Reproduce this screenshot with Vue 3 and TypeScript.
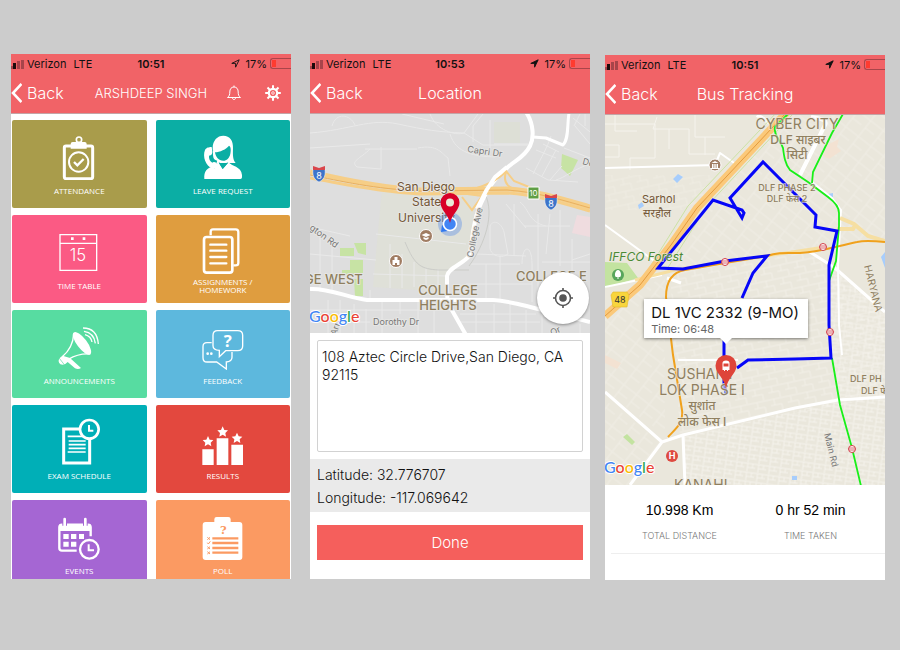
<script setup lang="ts">
import { ref } from 'vue'

interface Screen {
  id: string
  time: string
  title: string
}
interface Tile {
  id: string
  label: string
  color: string
  box: string
}

const screens: Screen[] = [
  { id: 'home', time: '10:51', title: 'ARSHDEEP SINGH' },
  { id: 'location', time: '10:53', title: 'Location' },
  { id: 'bus', time: '10:51', title: 'Bus Tracking' },
]

const tiles: Tile[] = [
  { id: 'attendance', label: 'ATTENDANCE', color: '#a99c4b', box: '171 261 132 144' },
  { id: 'leave', label: 'LEAVE REQUEST', color: '#0baea4', box: '602 261 132 144' },
  { id: 'timetable', label: 'TIME TABLE', color: '#fb5a84', box: '171 66 132 144' },
  { id: 'homework', label: 'ASSIGNMENTS / HOMEWORK', color: '#df9d3f', box: '602 66 132 144' },
  { id: 'announce', label: 'ANNOUNCEMENTS', color: '#57dca1', box: '171 351 132 144' },
  { id: 'feedback', label: 'FEEDBACK', color: '#5db8dd', box: '602 351 132 144' },
  { id: 'exam', label: 'EXAM SCHEDULE', color: '#00afb7', box: '171 66 132 144' },
  { id: 'results', label: 'RESULTS', color: '#e3483e', box: '602 66 132 144' },
  { id: 'events', label: 'EVENTS', color: '#a566d3', box: '171 351 132 144' },
  { id: 'poll', label: 'POLL', color: '#fb9a62', box: '602 351 132 144' },
]

const address = ref('108 Aztec Circle Drive,San Diego, CA 92115')
const stops = [
  [120, 147],
  [218, 132],
  [225, 217],
  [247, 334],
]
const stars = [
  [623, 139],
  [667, 110],
  [710, 129],
]
</script>

<template>
  <main class="board">
    <section v-for="s in screens" :key="s.id" class="phone" :class="s.id">
      <header class="top">
        <div class="status">
          <span class="carrier">
            <svg class="signal" viewBox="0 0 14 10" aria-hidden="true">
              <path d="M0 7h2v3H0z" fill="#a8444a" />
              <path d="M2 4h3v6H2z" fill="#1c0a0b" />
              <path d="M6 2h3v8H6zM10 1h3v9h-3z" fill="#a8444a" />
            </svg>
            <span>Verizon</span><span class="net">LTE</span>
          </span>
          <strong>{{ s.time }}</strong>
          <span class="power">
            <svg class="arrow" viewBox="0 0 9 9" aria-hidden="true">
              <path d="M.8 4.4 8.2.8 4.6 8.2V4.4z" :fill="s.id === 'home' ? 'none' : '#111'" stroke="#111" stroke-width=".9" />
            </svg>
            <span>17%</span>
            <span class="battery"><i></i></span>
          </span>
        </div>
        <div class="nav">
          <button class="back" type="button">
            <svg viewBox="0 0 11 20" aria-hidden="true"><path d="M10.500 1 2 10l8.500 9" fill="none" stroke="#fff" stroke-width="2.600" /></svg>
            <span>Back</span>
          </button>
          <h1>{{ s.title }}</h1>
          <div class="tools">
            <template v-if="s.id === 'home'">
              <button type="button" aria-label="Notifications">
                <svg viewBox="0 0 16 16" fill="none" stroke="#fff" stroke-width="1">
                  <path d="M1.500 12.500h13c-2-1.500-2.300-3-2.300-5.500 0-3-1.500-5-4.200-5S3.800 4 3.800 7c0 2.500-.3 4-2.300 5.500zM8 2V.5M6.500 13c0 2 3 2 3 0" />
                </svg>
              </button>
              <button type="button" aria-label="Settings">
                <svg viewBox="0 0 16 16" fill="none" stroke="#fff">
                  <circle cx="8" cy="8" r="4.200" stroke-width="2.200" />
                  <circle cx="8" cy="8" r="1.300" stroke-width=".8" />
                  <path d="M8 .2V4M8 12v3.800M.2 8H4M12 8h3.800M2.500 2.500l2.700 2.700M10.800 10.800l2.700 2.700M2.500 13.500l2.700-2.700M10.800 5.200l2.700-2.700" stroke-width="2" />
                </svg>
              </button>
            </template>
          </div>
        </div>
      </header>

      <nav v-if="s.id === 'home'" class="tiles">
        <button v-for="t in tiles" :key="t.id" type="button" class="tile" :style="{ background: t.color }">
          <svg :viewBox="t.box" fill="none" stroke="#fff" aria-hidden="true">
            <template v-if="t.id === 'attendance'">
              <rect x="193" y="303" width="85" height="98" rx="5" stroke-width="9" />
              <circle cx="237" cy="284" r="8" stroke-width="5" />
              <path d="M212 311v-14q0-6 6-6h36q6 0 6 6v14z" fill="#fff" stroke="none" />
              <circle cx="236" cy="351" r="29" stroke-width="6" />
              <path d="m222 351 10 10 19-19" stroke-width="7" />
            </template>
            <template v-else-if="t.id === 'leave'">
              <path d="M637 310c0-24 14-38 32-38 20 0 30 15 29 38-1 22 0 36 8 44h-62c-6-12-7-30-7-44z" fill="#fff" stroke="none" />
              <path d="M612 402c-2-22 8-34 28-38l14-12 13 20 18-20c8 12 38 12 40 38v7q0 5-5 5z" fill="#fff" stroke="none" />
              <path d="M644 322c14-1 34-9 42-20 6 3 6 14 4 24-3 14-11 21-21 21-14 0-23-11-25-25z" :fill="t.color" stroke="none" />
              <path d="M655 352q12 8 29 0l-17 20z" :fill="t.color" stroke="none" />
              <path d="M629 309c-10 14-8 42 18 50" :stroke="t.color" stroke-width="24" />
              <path d="M634 306c-10 1-15 1-20 9-8 20 2 48 22 56 8 2 14-3 17-9-1-8-12-14-17-9-7-3-11-13-10-21 8 0 10-5 10-14z" fill="#fff" stroke="none" />
            </template>
            <template v-else-if="t.id === 'timetable'">
              <path d="M180 89h110v107H180zM180 115h110" stroke-width="4" />
              <path d="M213 97h8v8h-8zM248 97h8v8h-8z" fill="#fff" stroke="none" />
              <text x="234" y="168" class="day">15</text>
            </template>
            <template v-else-if="t.id === 'homework'">
              <path d="M631 91V80q0-7 7-7h68q8 0 8 8v92q0 8-8 8h-7" stroke-width="7" />
              <rect x="611" y="96" width="85" height="107" rx="8" stroke-width="8" />
              <path d="M630 119h48M630 137h48M630 156h48M630 175h48" stroke-width="7" stroke-linecap="round" />
            </template>
            <template v-else-if="t.id === 'announce'">
              <ellipse cx="246" cy="415" rx="15" ry="41" transform="rotate(-37 246 415)" fill="#fff" stroke="none" />
              <path d="M221 386c-1 28-14 52-35 70M271 447c-25-2-46 4-66 16" stroke-width="4" />
              <path d="m188 452 22 7 33 30q-8 5-18 1l-22-19q-9 11-22 7-10-10-1-20z" fill="#fff" stroke="none" />
              <path d="m178 460 14 18" :stroke="t.color" stroke-width="2" />
              <path d="M249 369q42 0 46 48M252 379q30 4 34 36M255 389q18 5 21 22" stroke-width="4" />
            </template>
            <template v-else-if="t.id === 'feedback'">
              <path d="M634 413h-14q-12 0-12 12v33q0 13 12 13h29l29 21v-21q17-1 17-14v-16" stroke-width="4" />
              <path d="M652 377h60q15 0 15 14v32q0 14-15 14h-36l-19 18v-19q-19-1-19-14v-31q0-14 14-14z" stroke-width="4" />
              <circle cx="622" cy="446" r="4" fill="#fff" stroke="none" />
              <circle cx="633" cy="446" r="4" fill="#fff" stroke="none" />
              <text x="682" y="426" class="query">?</text>
            </template>
            <template v-else-if="t.id === 'exam'">
              <path d="M191 102h78v102h-78z" stroke-width="9" />
              <path d="M203 124h54M206 138h51M206 149h51M206 160h51M203 171h54" stroke-width="5" />
              <circle cx="268" cy="103" r="28" :fill="t.color" stroke-width="8" />
              <path d="M267 90v17h13" stroke-width="6" />
            </template>
            <template v-else-if="t.id === 'results'">
              <path d="M606 163h34v47h-34zM649 130h35v80h-35zM693 149h35v61h-35z" fill="#fff" stroke="none" />
              <path
                v-for="p in stars"
                :key="p[0]"
                :transform="`translate(${p[0]} ${p[1]})`"
                d="M0-16 5-5 16-4 8 4 10 15 0 9-10 15-8 4-16-4-5-5z"
                fill="#fff"
                stroke="none"
              />
            </template>
            <template v-else-if="t.id === 'events'">
              <path d="M230 467h-44q-8 0-8-8v-62q0-8 8-8h78q8 0 8 8v27" stroke-width="7" />
              <path d="M177 389h96v19h-96z" fill="#fff" stroke="none" />
              <path d="M194 373v19M256 373v19" :stroke="t.color" stroke-width="14" />
              <path d="M194 372v20M256 372v20" stroke-width="8" stroke-linecap="round" />
              <path d="M190 417h16v15h-16zM213 417h16v15h-16zM237 417h15v15h-15zM190 440h16v15h-16zM213 440h16v15h-16z" fill="#fff" stroke="none" />
              <circle cx="268" cy="463" r="33" :fill="t.color" stroke="none" />
              <circle cx="268" cy="463" r="28" stroke-width="7" />
              <path d="M266 448v18h16" stroke-width="6" />
            </template>
            <template v-else>
              <path d="M616 381h26v-8q0-7 7-7h35q7 0 7 7v8h26q9 0 9 9v96q0 9-9 9H616q-9 0-9-9v-96q0-9 9-9z" fill="#fff" stroke="none" />
              <path d="M636 430h78M636 444h78M636 459h78M636 473h78" :stroke="t.color" stroke-width="7" />
              <path d="m621 427 8 7m0-7-8 7m0 9 3 4 6-8m-9 16 8 7m0-7-8 7m0 8 8 7m0-7-8 7" :stroke="t.color" stroke-width="3" />
              <text x="669" y="417" class="ask" :fill="t.color">?</text>
            </template>
          </svg>
          <span>{{ t.label }}</span>
        </button>
      </nav>

      <template v-else-if="s.id === 'location'">
        <div class="map">
          <svg viewBox="0 0 280 219" preserveAspectRatio="xMidYMid slice" fill="none" role="img" aria-label="Map of College Heights, San Diego">
            <path d="M0 0h280v219H0z" fill="#dedede" />
            <path d="M72 75 65 150l-2 23 72 5 2-18 22-20 7-60-60-4z" fill="#dfe0d8" />
            <path d="M184 8h26v21h-26z" fill="#dddfd6" />
            <path d="M252 40l16 6-8 16-9-8zM30 134h14v8H30zM44 129h12v12l-8-2zM40 146h13v13H40zM32 156h12v5H32zM44 165h9v17h-8z" fill="#c7e3a4" />
            <path d="m267 101 13 2v20l-18-4z" fill="#efdcdf" />
            <g stroke="#e9e9e9" stroke-width="1">
              <path d="M0 19C40 16 60 4 88 10s40 8 66 9M154 19l19 12h48M120 0c6 16 25 22 34 19l14-19M22 12C26-2 40 0 45 11M173 0l-10 12v16M180 6v30M184 30h34M92 0l42 10M0 34l60-4M55 35h52M60 35c-10 10-20 12-13 18l24 2V33M108 34c20-4 24 6 30 10l2 18M140 20c6 20 25 22 45 23" />
              <path d="M223 60c10-20 14-26 18-38M216 54l22 12 30 2M226 36l20 8M233 30l16 8M232 62l14-26M240 66l12-14M263 4l17 14M265 12l15 18M254 34l26 10M246 66c8-2 20-12 34-16M270 0l-6 12M275 0v12" />
              <path d="M0 113 40 122M0 140l66 6M10 120v58M22 126v52M66 120l90 10M63 160l74 2M80 130v44M92 140v34M104 148v25M116 154v20M128 155v22M60 176v10M30 186v33M0 196h140M18 186v33M44 190v29M56 195v24M72 188v31M90 188v12M108 188v31M124 188v31M0 208h60" />
              <path d="M160 150h50M166 140l50 2M180 112c4-8 12-2 14 6l4 22c-8 6-18 0-18-6zM176 150v34M190 142v44M204 90v52M212 150c0-20 10-20 10 0v38M228 100v84M214 112h46M240 100l-4 40M250 96v56M262 125v40M232 148h48M156 170h66M150 200h76M166 188v31M184 190v29M200 190v29M216 196v23M232 200v19M150 208h80M196 90l20 24M210 88c10 8 8 20 26 24M262 146l18-6M270 210v9" />
            </g>
            <path d="M95 128c10 24 16 27 34 28h30M175 80c10 20 0 50-16 72" stroke="#cbccc8" stroke-width="1" />
            <g stroke="#fff" stroke-linejoin="round">
              <path d="M0 175c20-1 38 9 57 11h126c18 1 40 8 97 22" stroke-width="4" />
              <path d="M216-2c8 12 8 26 4 34-6 12-16 15-23 22-15 12-22 26-28 40-8 20-6 36-10 48-6 8-21 12-22 20 0 20 0 25 2 29l17 30" stroke-width="4" />
              <path d="m223 23 13 1 17 7c6-6 4-20 6-32" stroke-width="3" />
            </g>
            <g stroke="#f6ce87">
              <path d="M0 58c30 7 70 16 110 18l87-1c30 2 55 10 83 18" stroke-width="5" />
              <path d="M0 64c30 5 60 13 110 16l87-1c30 2 55 10 83 18" stroke-width="3" />
              <path d="M150 78c24-4 40-13 46-21l8 10 20 8M196 58c-4 12 4 17 14 18M150 79l22 3-10 14-10-13" stroke-width="2" />
            </g>
            <path d="M0 61c30 6 65 14 110 16l87-1c30 2 55 10 83 18" stroke="#e9b060" />
            <path d="m167 95 9-18 9-14 12-10" stroke="#fff" stroke-width="4" />
            <g class="road">
              <text x="157" y="38" transform="rotate(8 157 38)">Capri Dr</text>
              <text x="272" y="50" transform="rotate(15 272 50)">De</text>
              <text x="-1" y="115" transform="rotate(36 -1 115)">gton Rd</text>
              <text x="163" y="144" transform="rotate(-79 163 144)">College Ave</text>
              <text x="63" y="211">Dorothy Dr</text>
              <text x="26" y="222" transform="rotate(-70 26 222)">Arn</text>
              <text x="242" y="222" transform="rotate(-25 242 222)">Or</text>
            </g>
            <g class="place brown">
              <text x="87" y="77">San Diego</text>
              <text x="102" y="92">State</text>
              <text x="88" y="108">University</text>
            </g>
            <g class="area wide">
              <text x="-6" y="170">GE WEST</text>
              <text x="138" y="181" text-anchor="middle">COLLEGE</text>
              <text x="138" y="196" text-anchor="middle">HEIGHTS</text>
              <text x="206" y="167">COLLEGE E</text>
            </g>
            <g v-for="p in [[9, 60], [241, 88]]" :key="p[0]" :transform="`translate(${p[0]} ${p[1]})`">
              <path d="M-6-5C-7 3-4 6 0 8 4 6 7 3 6-5z" fill="#3d74c9" stroke="#fff" stroke-width=".5" />
              <path d="M-6-8 0-6 6-8v4H-6z" fill="#d9464c" />
              <text y="5" class="num">8</text>
            </g>
            <path d="M218 73h11v12h-11z" fill="#5f9f45" stroke="#fff" />
            <text x="223.500" y="82" class="num small">10</text>
            <g fill="#a07c62" stroke="#fff"><circle cx="116" cy="122" r="6.500" /><circle cx="86" cy="147" r="6.500" /></g>
            <path d="m111.500 121 4.500-2 4.500 2-4.500 2zM113.500 123v2l2.500 1 2.500-1v-2l-2.500 1zM82.500 146h2v-3h3v3h2v5h-2.500v-2h-2v2h-2.500z" fill="#fff" />
            <circle cx="140" cy="110" r="12" fill="#5b8fe8" fill-opacity=".4" />
            <path d="m131 118 1-7 6 6z" fill="#2f78f0" />
            <circle cx="140" cy="110" r="6.500" fill="#4285f4" stroke="#fff" stroke-width="1.500" />
            <path d="M140 109c-2-9-9.500-13-9.500-20.500a9.500 9.500 0 0 1 19 0C149.500 96 142 100 140 109z" fill="#d80027" />
            <circle cx="140" cy="88.500" r="4" fill="#e8ecd8" />
            <text x="-1" y="208" class="logo"><tspan fill="#4285f4">G</tspan><tspan fill="#ea4335">o</tspan><tspan fill="#fbbc05">o</tspan><tspan fill="#4285f4">g</tspan><tspan fill="#34a853">l</tspan><tspan fill="#ea4335">e</tspan></text>
          </svg>
          <button class="locate" type="button" aria-label="Centre on my location">
            <svg viewBox="0 0 20 20" fill="none" stroke="#555" stroke-width="1.600" aria-hidden="true">
              <circle cx="10" cy="10" r="7.500" /><circle cx="10" cy="10" r="3.800" fill="#555" stroke="none" />
              <path d="M10 0v3M10 17v3M0 10h3M17 10h3" />
            </svg>
          </button>
        </div>
        <textarea v-model="address" class="address" aria-label="Address"></textarea>
        <div class="coords">
          <p>Latitude: 32.776707</p>
          <p>Longitude: -117.069642</p>
        </div>
        <button class="done" type="button">Done</button>
      </template>

      <template v-else>
        <div class="map terrain">
          <svg viewBox="0 0 280 370" preserveAspectRatio="xMidYMid slice" fill="none" role="img" aria-label="Bus route map">
            <defs>
              <pattern id="streets-a" width="17" height="13" patternUnits="userSpaceOnUse" patternTransform="rotate(-12)">
                <path d="M0 1h17M4 1v6M11 7v6M0 7h11" stroke="#f6f4ee" stroke-width=".8" />
              </pattern>
              <pattern id="streets-b" width="11" height="9" patternUnits="userSpaceOnUse" patternTransform="rotate(8)">
                <path d="M0 1h11M3 1v8M8 1v4M3 5h8" stroke="#f7f5f0" stroke-width=".8" />
              </pattern>
              <pattern id="streets-c" width="16" height="20" patternUnits="userSpaceOnUse" patternTransform="rotate(38)">
                <path d="M0 1h16M5 1v19M5 10h11" stroke="#f5f3ec" stroke-width=".8" />
              </pattern>
            </defs>
            <path d="M0 0h280v370H0z" fill="#eae7dc" />
            <path d="M0 9h50v34H25v12M52 2l-4 12h36v25h26M10 0v16h22M64 14v20M0 30h14v12H0M90 0v22h30M100 22v18" stroke="#f5f3ed" />
            <path d="M0 60h110l-20 35H0z" fill="url(#streets-a)" opacity=".5" />
            <path d="M180 0h100v127l-120 14-95 14 35-55z" fill="url(#streets-c)" opacity=".7" />
            <path d="M65 157 205 137l75 60v85L75 320z" fill="url(#streets-a)" opacity=".8" />
            <path d="m78 322 155-36 47-4v88H80z" fill="url(#streets-b)" />
            <path d="M0 200 60 160v160L0 277zM0 285l55 42-30 43H0z" fill="url(#streets-c)" opacity=".7" />
            <path d="M224 150l56 47v85h-45l-9-42z" fill="url(#streets-b)" opacity=".8" />
            <path d="m0 147 22 1 11 15-33 10zM18 322l4-3 8 8-3 3z" fill="#c3e3a0" />
            <path d="m68 64 5-5 5 3-6 6zM33 90l4-3 2 4-5 3zM223 79l5-1v4h-5zM187 361h5v4h-5zM276 142l4-5v16z" fill="#a7cdfc" />
            <path d="m222 30 12-6-2 8 4 4-12 8-6-3zM0 240l16 8-4 6-12-6z" fill="#f3e2d2" />
            <g stroke="#fff" stroke-linejoin="round">
              <path d="m0 110 55 40M0 53l110-3 5-12 17 12M0 172l57-12M73 245h60" stroke-width="2" />
              <path d="m205 137 25 16 50 44M0 277l57 50 21-7 112-27 43-8 47-3M57 327l-32 43M78 320l2 50M62 163l14 5" stroke-width="3" />
              <path d="M206 2c14 2 16 4 14 8l-25 50M152 0l20 12" stroke-width="4" />
              <path d="m207 67 20 16 9 12-3 55 1 60 3 30" stroke-width="2" />
            </g>
            <path d="M232 114h16l3-5M235 103l14 6 14 12 17 5" stroke="#f6dfa2" stroke-width="4" />
            <path d="m30 165 44-11 146-22" stroke="#f6dfa2" stroke-width="3" />
            <path d="m173-4-90 95-45 72" stroke="#cbe2a4" stroke-width="1" />
            <path d="m187 0-85 91-40 63" stroke="#cbe2a4" stroke-width="1" />
            <path d="M182-3 92 93 66 130 35 170 0 201" stroke="#fbc97a" stroke-width="8" />
            <path d="M182-3 92 93 66 130 35 170 0 201" stroke="#e39a3e" />
            <path d="M280 127c-10-1-20-2-28 0-20 4-36 10-57 11-14 0-22-1-33 3l-42 7-40 7c-12 2-19 10-19 27l7 58 9 55c2 14-8 20-14 27" stroke="#f0a11c" stroke-width="2" />
            <g stroke="#18f018" stroke-width="1.800">
              <path d="m238-1-11 19-19 39-1 11M183-1l-13 13c-2 8 6 14 8 21 1 8 2 16 7 22l18 12 20 15q11 8 11 16v13l-3 35-7 20" />
              <path d="m227 243 8 47 12 43 9 38" />
            </g>
            <path
              d="m137 183 11-25 14-17-42 5-42 8-25-1 55-68 29 10 2 3-2 5-12-20 33-36 53 53-1 12 22 4-8 34v60l2 33-36 1-47 1-11 8M119 214v55"
              stroke="#0606f8"
              stroke-width="3"
            />
            <path d="m119 268 2 11" stroke="#7070f0" stroke-width="3" />
            <g v-for="p in stops" :key="p[0]" :transform="`translate(${p[0]} ${p[1]})`">
              <circle r="3.500" fill="#fff" stroke="#d13c47" /><path d="M-3-1h6M-3 1h6" stroke="#d13c47" stroke-width=".8" />
            </g>
            <g class="area">
              <text x="192" y="14" text-anchor="middle" class="big">CYBER CITY</text>
              <text x="193" y="29" text-anchor="middle" class="mid">DLF साइबर</text>
              <text x="192" y="44" text-anchor="middle" class="mid">सिटी</text>
              <text x="182" y="76" text-anchor="middle" class="sub">DLF PHASE 2</text>
              <text x="182" y="87" text-anchor="middle" class="sub">DLF फेस 2</text>
              <text x="62" y="264" class="big">SUSHANT</text>
              <text x="97" y="280" text-anchor="middle" class="big">LOK PHASE I</text>
              <text x="97" y="295" text-anchor="middle" class="mid">सुशांत</text>
              <text x="97" y="311" text-anchor="middle" class="mid">लोक फेस I</text>
              <text x="245" y="267" class="sub">DLF PH</text>
              <text x="256" y="279" class="sub">DLF फे</text>
              <text x="69" y="375" class="big">KANAHI</text>
              <text x="259" y="151" transform="rotate(76 259 151)" class="sub tilted">HARYANA</text>
            </g>
            <g class="place brown small">
              <text x="37" y="88">Sarhol</text>
              <text x="38" y="102">सरहौल</text>
            </g>
            <text x="4" y="146" class="place green">IFFCO Forest</text>
            <text x="219" y="319" transform="rotate(76 219 319)" class="road">Main Rd</text>
            <circle cx="110" cy="50" r="6" fill="#a07c62" stroke="#fff" />
            <path d="m106.500 48 3.500-2 3.500 2zM107 49h1.500v4H107zM109.300 49h1.400v4h-1.400zM111.500 49h1.500v4h-1.500zM106 53h8v1h-8z" fill="#fff" />
            <circle cx="13" cy="160" r="6" fill="#58a55c" />
            <path d="M13 155c3 0 4 6 2 7h-1.500v2h-1v-2H11c-2-1-1-7 2-7z" fill="#fff" />
            <path d="M8 177h14l2 3-2 12H8l-2-12z" fill="#f8d53c" stroke="#e0b92c" stroke-width=".6" />
            <text x="15" y="188" class="num dark">48</text>
            <circle cx="67" cy="341" r="6" fill="#de4a40" />
            <text x="67" y="344" class="num bold">H</text>
            <path d="M121 274c-1-11-10.500-15-10.500-23.500a10.500 10.500 0 0 1 21 0C131.500 259 122 263 121 274z" fill="#de4439" />
            <path d="M117.500 248q0-2.500 3.500-2.500t3.500 2.500v7h-1.500v1h-1v-1h-2v1h-1v-1h-1.500z" fill="#fff" />
            <path d="M118.500 248.500h5v3h-5z" fill="#de4439" />
            <text x="-1" y="358" class="logo"><tspan fill="#4285f4">G</tspan><tspan fill="#ea4335">o</tspan><tspan fill="#fbbc05">o</tspan><tspan fill="#4285f4">g</tspan><tspan fill="#34a853">l</tspan><tspan fill="#ea4335">e</tspan></text>
          </svg>
          <div class="callout">
            <b>DL 1VC 2332 (9-MO)</b>
            <span>Time: 06:48</span>
          </div>
        </div>
        <dl class="stats">
          <div><dt>TOTAL DISTANCE</dt><dd>10.998 Km</dd></div>
          <div><dt>TIME TAKEN</dt><dd>0 hr 52 min</dd></div>
        </dl>
      </template>
    </section>
  </main>
</template>

<style>
body {
  margin: 0;
  background: #ccc;
}
</style>

<style scoped>
* {
  box-sizing: border-box;
}
button {
  border: 0;
  padding: 0;
  background: none;
  color: inherit;
  font: inherit;
  cursor: pointer;
}
.board {
  display: flex;
  align-items: flex-start;
  padding: 54px 15px 54px 11px;
  font-family: Inter, "Liberation Sans", "Noto Sans", sans-serif;
}
.phone {
  flex: 1 1 0;
  min-width: 0;
  min-height: 0;
  aspect-ratio: 8 / 15;
  overflow: hidden;
  background: #fff;
}
.location {
  margin-left: 19px;
}
.bus {
  margin: 1px 0 0 15px;
}
.top {
  background: #f16367;
  border-bottom: 1px solid #c4a4a6;
}
.status {
  display: grid;
  grid-template-columns: 1fr auto 1fr;
  align-items: center;
  height: 19px;
  color: #111;
  font-size: 11px;
}
.status strong {
  font-weight: 600;
}
.carrier,
.power {
  display: flex;
  align-items: center;
  gap: 3px;
}
.carrier {
  gap: 2px;
}
.power {
  justify-content: flex-end;
}
.net {
  margin-left: 5px;
}
.signal {
  width: 14px;
  height: 10px;
}
.arrow {
  width: 9px;
  height: 9px;
  margin-right: 2px;
}
.battery {
  width: 21px;
  height: 11px;
  padding: 1px;
  border: 1px solid #a9454a;
  border-right: 0;
  border-radius: 3px 0 0 3px;
}
.battery i {
  display: block;
  width: 4px;
  height: 7px;
  background: #ff3b30;
}
.nav {
  display: grid;
  grid-template-columns: 1fr auto 1fr;
  align-items: center;
  height: 40px;
  color: #fff;
  font-weight: 300;
}
.back {
  display: flex;
  align-items: center;
  gap: 5px;
  font-size: 16px;
}
.back svg {
  width: 11px;
  height: 20px;
}
h1 {
  margin: 0;
  font-size: 16px;
  font-weight: 300;
}
.home h1 {
  font-size: 13px;
}
.tools {
  display: flex;
  justify-content: flex-end;
  gap: 23px;
  padding-right: 10px;
}
.tools svg {
  display: block;
  width: 16px;
  height: 16px;
}
.tiles {
  display: grid;
  grid-template-columns: 1fr 1fr;
  grid-auto-rows: 88px;
  gap: 7px 9px;
  padding: 6px 1px 0;
}
.tile {
  display: flex;
  flex-direction: column;
  align-items: center;
  padding-top: 12px;
  border-radius: 2px;
  color: #fff;
  font: 400 8px/8px "Open Sans", "Noto Sans", sans-serif;
}
.tile svg {
  flex: none;
  width: 44px;
  height: 48px;
}
.tile > span {
  display: flex;
  align-items: center;
  justify-content: center;
  height: 12px;
  max-width: 72px;
  margin-top: 5px;
}
.day,
.query,
.ask {
  stroke: none;
  text-anchor: middle;
  fill: #fff;
}
.day {
  font: 300 50px Inter, sans-serif;
}
.query {
  font: 700 50px "Noto Sans", sans-serif;
}
.ask {
  font: 700 34px "DejaVu Serif", serif;
  fill: #fb9a62;
}
.map {
  position: relative;
}
.map > svg {
  display: block;
  width: 100%;
}
.map text {
  font-family: Inter, "Noto Sans", sans-serif;
  paint-order: stroke;
  stroke: #e6e6e4;
  stroke-width: 2px;
  stroke-linejoin: round;
}
.terrain text {
  stroke: #eeebe2;
  stroke-opacity: 0.6;
}
.map .road {
  fill: #777;
  font-size: 9px;
}
.map .place {
  font-size: 12px;
}
.map .small {
  font-size: 11px;
}
.map .brown {
  fill: #735636;
}
.map .green {
  fill: #4a8a35;
  font-style: italic;
}
.map .area {
  fill: #8f7f5f;
  font-size: 12px;
  font-weight: 500;
}
.map .wide {
  font-size: 13px;
}
.map .big {
  font-size: 14px;
  font-weight: 400;
}
.map .mid {
  font-size: 12px;
}
.map .sub {
  font-size: 9px;
}
.map .tilted {
  font-size: 10px;
  font-weight: 400;
}
.map .num {
  fill: #fff;
  stroke: none;
  font-size: 9px;
  text-anchor: middle;
}
.map .num.small {
  font-size: 8px;
}
.map .num.dark {
  fill: #333;
}
.map .num.bold {
  font-weight: 700;
}
.map .logo {
  font: 500 16px Lato, sans-serif;
  stroke: #fff;
  stroke-opacity: 1;
}
.locate {
  position: absolute;
  right: 1px;
  bottom: 9px;
  display: grid;
  place-items: center;
  width: 52px;
  height: 52px;
  border-radius: 50%;
  background: #fff;
  box-shadow: 0 1px 3px rgba(0, 0, 0, 0.4);
}
.locate svg {
  width: 20px;
  height: 20px;
}
.address {
  display: block;
  width: calc(100% - 14px);
  height: 112px;
  margin: 7px;
  padding: 7px 4px;
  border: 1px solid #d2d2d2;
  border-radius: 2px;
  background: #fff;
  color: #111;
  font: 300 14px/18px Inter, "Liberation Sans", sans-serif;
  resize: none;
}
.coords {
  padding: 4px 7px 3px;
  background: #eaeaea;
  color: #111;
  font-size: 14px;
  font-weight: 300;
  line-height: 23px;
}
.coords p {
  margin: 0;
}
.done {
  display: block;
  width: calc(100% - 14px);
  height: 35px;
  margin: 13px 7px 0;
  background: #f55f5c;
  color: #fff;
  font-size: 15px;
  font-weight: 300;
}
.callout {
  position: absolute;
  left: 14%;
  bottom: 39.7%;
  padding: 5px 9px 2px 7px;
  background: #fff;
  box-shadow: 0 1px 3px rgba(0, 0, 0, 0.5);
  white-space: nowrap;
}
.callout::after {
  content: "";
  position: absolute;
  top: 100%;
  left: 50%;
  border: 6px solid transparent;
  border-top-color: #fff;
  border-bottom: 0;
  translate: -6px 0;
}
.callout b {
  display: block;
  color: #111;
  font-size: 15px;
  font-weight: 400;
  line-height: 18px;
}
.callout span {
  display: block;
  color: #666;
  font-size: 11px;
  line-height: 14px;
}
.stats {
  display: grid;
  grid-template-columns: 1fr 1fr;
  margin: 0 0 0 6px;
  padding: 14px 9px 9px 3px;
  border-bottom: 1px solid #eee;
  text-align: center;
}
.stats div {
  display: flex;
  flex-direction: column-reverse;
  gap: 7px;
}
.stats dd {
  margin: 0;
  color: #000;
  font: 400 14px/22px "Liberation Sans", sans-serif;
}
.stats dt {
  color: #777;
  font-size: 9px;
  font-weight: 300;
  line-height: 16px;
}
</style>
